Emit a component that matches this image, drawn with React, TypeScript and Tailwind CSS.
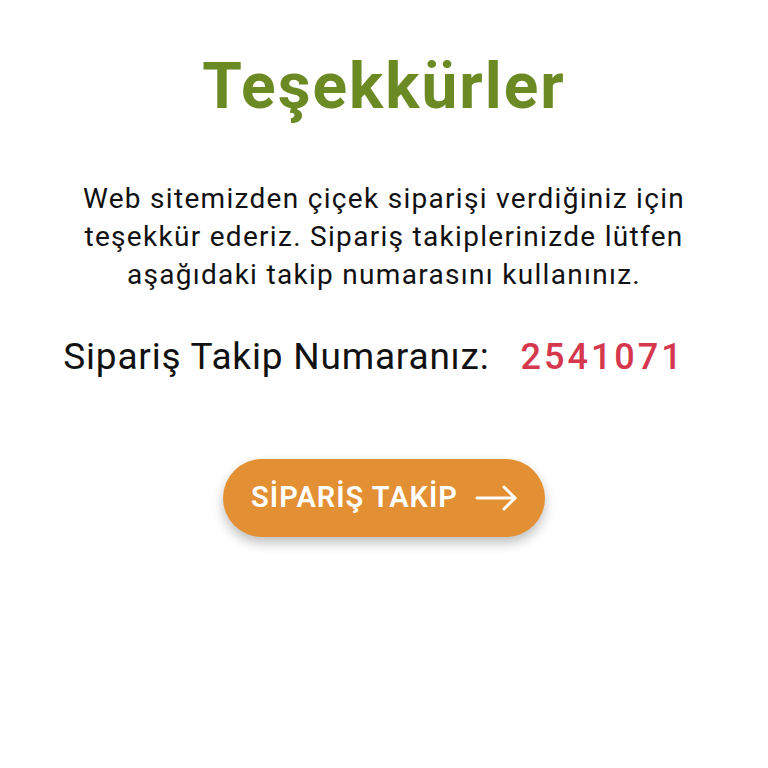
export default function App() {
  return (
    <div
      className="w-[768px] h-[768px] bg-white flex flex-col items-center"
      style={{ fontFamily: "Roboto, 'Noto Sans', sans-serif" }}
    >
      <h1 className="mt-[47px] text-[64px] leading-[80px] font-bold text-[#6b8a24] tracking-[2px]">
        Teşekkürler
      </h1>

      <p className="mt-[53px] w-[630px] text-center text-[28px] leading-[38px] tracking-[1.3px] text-[#111]">
        Web sitemizden çiçek siparişi verdiğiniz için teşekkür ederiz. Sipariş takiplerinizde lütfen
        aşağıdaki takip numarasını kullanınız.
      </p>

      <div className="mt-[39px] pr-[20px] flex items-baseline gap-[31px] leading-[48px]">
        <span className="text-[37px] tracking-[0.8px] text-[#111]">Sipariş Takip Numaranız:</span>
        <span className="text-[36px] tracking-[3px] font-medium text-[#d5374d]">2541071</span>
      </div>

      <button className="mt-[78px] w-[322px] h-[78px] rounded-full bg-[#e38f34] shadow-[0_6px_12px_rgba(0,0,0,0.25)] flex items-center justify-center gap-[17px] text-white">
        <span className="text-[29px] font-semibold tracking-[1px]">SİPARİŞ TAKİP</span>
        <svg width="42" height="26" viewBox="0 0 42 26" fill="none" stroke="currentColor" strokeWidth="3" strokeLinecap="round" strokeLinejoin="round">
          <path d="M2 13h38" />
          <path d="M29 2l11 11-11 11" />
        </svg>
      </button>
    </div>
  );
}
